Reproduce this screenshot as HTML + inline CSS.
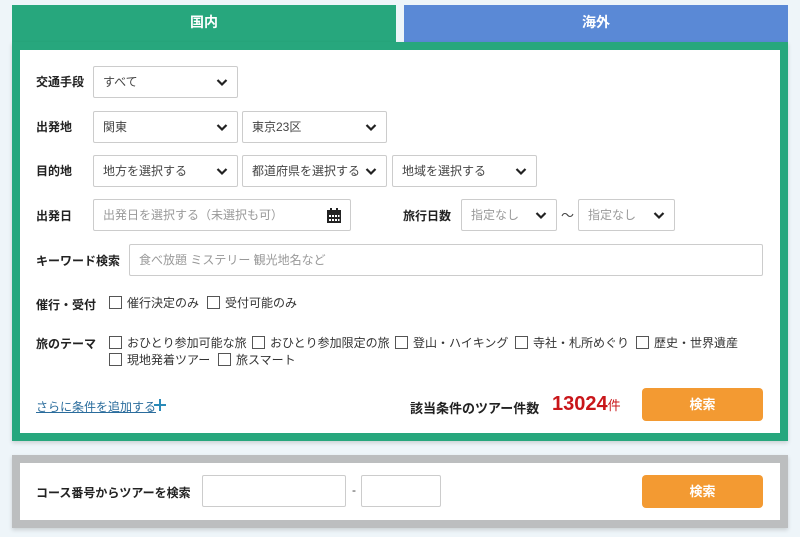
<!DOCTYPE html>
<html><head><meta charset="utf-8"><style>
*{box-sizing:border-box;margin:0;padding:0}
body{width:800px;height:537px;background:#eef5f9;font-family:"Liberation Sans","Noto Sans CJK JP",sans-serif;position:relative;overflow:hidden;color:#222}
.a{position:absolute}
.tab{top:5px;height:37px;color:#fff;font-weight:bold;font-size:14px;text-align:center;line-height:34px}
.lbl{font-size:12px;font-weight:bold;color:#222;white-space:nowrap}
.sel{height:32px;border:1px solid #ccc;border-radius:2px;background:#fff;font-size:12px;color:#444;padding-left:9px;line-height:31px}
.sel svg{position:absolute;right:9px;top:11px}
.ph{color:#999}
.cb{font-size:12px;color:#333;white-space:nowrap;display:flex;align-items:center}
.cb i{display:inline-block;width:13px;height:13px;border:1px solid #555;margin-right:5px;background:#fff}
.btn{background:#f39a32;color:#fff;font-weight:bold;font-size:13px;text-align:center;border-radius:4px}
</style></head><body>
<div class="a tab" style="left:12px;width:384px;background:#27a77d">国内</div>
<div class="a tab" style="left:404px;width:384px;background:#5a89d6">海外</div>
<div class="a" style="left:12px;top:42px;width:776px;height:399px;background:#27a77d;box-shadow:0 2px 4px rgba(0,0,0,.15)"></div>
<div class="a" style="left:20px;top:50px;width:760px;height:383px;background:#fff"></div>

<div class="a lbl" style="left:36px;top:73px">交通手段</div>
<div class="a sel" style="left:93px;top:66px;width:145px">すべて<svg width="12" height="9" viewBox="0 0 12 9"><path d="M1.5 2l4.5 4.5L10.5 2" fill="none" stroke="#222" stroke-width="2.2"/></svg></div>

<div class="a lbl" style="left:36px;top:118px">出発地</div>
<div class="a sel" style="left:93px;top:111px;width:145px">関東<svg width="12" height="9" viewBox="0 0 12 9"><path d="M1.5 2l4.5 4.5L10.5 2" fill="none" stroke="#222" stroke-width="2.2"/></svg></div>
<div class="a sel" style="left:242px;top:111px;width:145px">東京23区<svg width="12" height="9" viewBox="0 0 12 9"><path d="M1.5 2l4.5 4.5L10.5 2" fill="none" stroke="#222" stroke-width="2.2"/></svg></div>

<div class="a lbl" style="left:36px;top:162px">目的地</div>
<div class="a sel" style="left:93px;top:155px;width:145px">地方を選択する<svg width="12" height="9" viewBox="0 0 12 9"><path d="M1.5 2l4.5 4.5L10.5 2" fill="none" stroke="#222" stroke-width="2.2"/></svg></div>
<div class="a sel" style="left:242px;top:155px;width:145px">都道府県を選択する<svg width="12" height="9" viewBox="0 0 12 9"><path d="M1.5 2l4.5 4.5L10.5 2" fill="none" stroke="#222" stroke-width="2.2"/></svg></div>
<div class="a sel" style="left:392px;top:155px;width:145px">地域を選択する<svg width="12" height="9" viewBox="0 0 12 9"><path d="M1.5 2l4.5 4.5L10.5 2" fill="none" stroke="#222" stroke-width="2.2"/></svg></div>

<div class="a lbl" style="left:36px;top:207px">出発日</div>
<div class="a sel ph" style="left:93px;top:199px;width:258px">出発日を選択する（未選択も可）<svg style="top:8px;right:8px" width="16" height="16" viewBox="0 0 16 16"><rect x="1" y="2" width="14" height="13" fill="#222"/><rect x="4" y="0" width="2" height="4" fill="#222"/><rect x="10" y="0" width="2" height="4" fill="#222"/><g fill="#fff"><rect x="3" y="7" width="2" height="2"/><rect x="6" y="7" width="2" height="2"/><rect x="9" y="7" width="2" height="2"/><rect x="12" y="7" width="1.5" height="2"/><rect x="3" y="11" width="2" height="2"/><rect x="6" y="11" width="2" height="2"/><rect x="9" y="11" width="2" height="2"/><rect x="12" y="11" width="1.5" height="2"/></g></svg></div>
<div class="a lbl" style="left:403px;top:207px">旅行日数</div>
<div class="a sel ph" style="left:461px;top:199px;width:96px">指定なし<svg width="12" height="9" viewBox="0 0 12 9"><path d="M1.5 2l4.5 4.5L10.5 2" fill="none" stroke="#222" stroke-width="2.2"/></svg></div>
<div class="a" style="left:561px;top:205px;font-size:13px;color:#444">〜</div>
<div class="a sel ph" style="left:578px;top:199px;width:97px">指定なし<svg width="12" height="9" viewBox="0 0 12 9"><path d="M1.5 2l4.5 4.5L10.5 2" fill="none" stroke="#222" stroke-width="2.2"/></svg></div>

<div class="a lbl" style="left:36px;top:252px">キーワード検索</div>
<div class="a sel ph" style="left:129px;top:244px;width:634px">食べ放題 ミステリー 観光地名など</div>

<div class="a lbl" style="left:36px;top:296px">催行・受付</div>
<div class="a cb" style="left:109px;top:294px"><i></i>催行決定のみ</div>
<div class="a cb" style="left:207px;top:294px"><i></i>受付可能のみ</div>

<div class="a lbl" style="left:36px;top:335px">旅のテーマ</div>
<div class="a cb" style="left:109px;top:334px"><i></i>おひとり参加可能な旅</div>
<div class="a cb" style="left:252px;top:334px"><i></i>おひとり参加限定の旅</div>
<div class="a cb" style="left:395px;top:334px"><i></i>登山・ハイキング</div>
<div class="a cb" style="left:515px;top:334px"><i></i>寺社・札所めぐり</div>
<div class="a cb" style="left:636px;top:334px"><i></i>歴史・世界遺産</div>
<div class="a cb" style="left:109px;top:351px"><i></i>現地発着ツアー</div>
<div class="a cb" style="left:218px;top:351px"><i></i>旅スマート</div>

<div class="a" style="left:36px;top:398px;font-size:12px;color:#2a6c9c;text-decoration:underline">さらに条件を追加する</div>
<svg class="a" style="left:154px;top:399px" width="12" height="12" viewBox="0 0 12 12"><path d="M6 0v12M0 6h12" stroke="#2a8ab8" stroke-width="2"/></svg>
<div class="a lbl" style="left:410px;top:398px;font-size:13px">該当条件のツアー件数</div>
<div class="a" style="left:552px;top:393px;font-size:20px;font-weight:bold;color:#c9161a">13024<span style="font-size:13px;font-weight:normal">件</span></div>
<div class="a btn" style="left:642px;top:388px;width:121px;height:33px;line-height:33px">検索</div>

<div class="a" style="left:12px;top:455px;width:776px;height:73px;background:#bcbebf;box-shadow:0 2px 4px rgba(0,0,0,.15)"></div>
<div class="a" style="left:20px;top:463px;width:760px;height:57px;background:#fff"></div>
<div class="a lbl" style="left:36px;top:484px">コース番号からツアーを検索</div>
<div class="a sel" style="left:202px;top:475px;width:144px"></div>
<div class="a" style="left:352px;top:483px;font-size:12px;color:#444">-</div>
<div class="a sel" style="left:361px;top:475px;width:80px"></div>
<div class="a btn" style="left:642px;top:475px;width:121px;height:33px;line-height:33px">検索</div>
</body></html>
